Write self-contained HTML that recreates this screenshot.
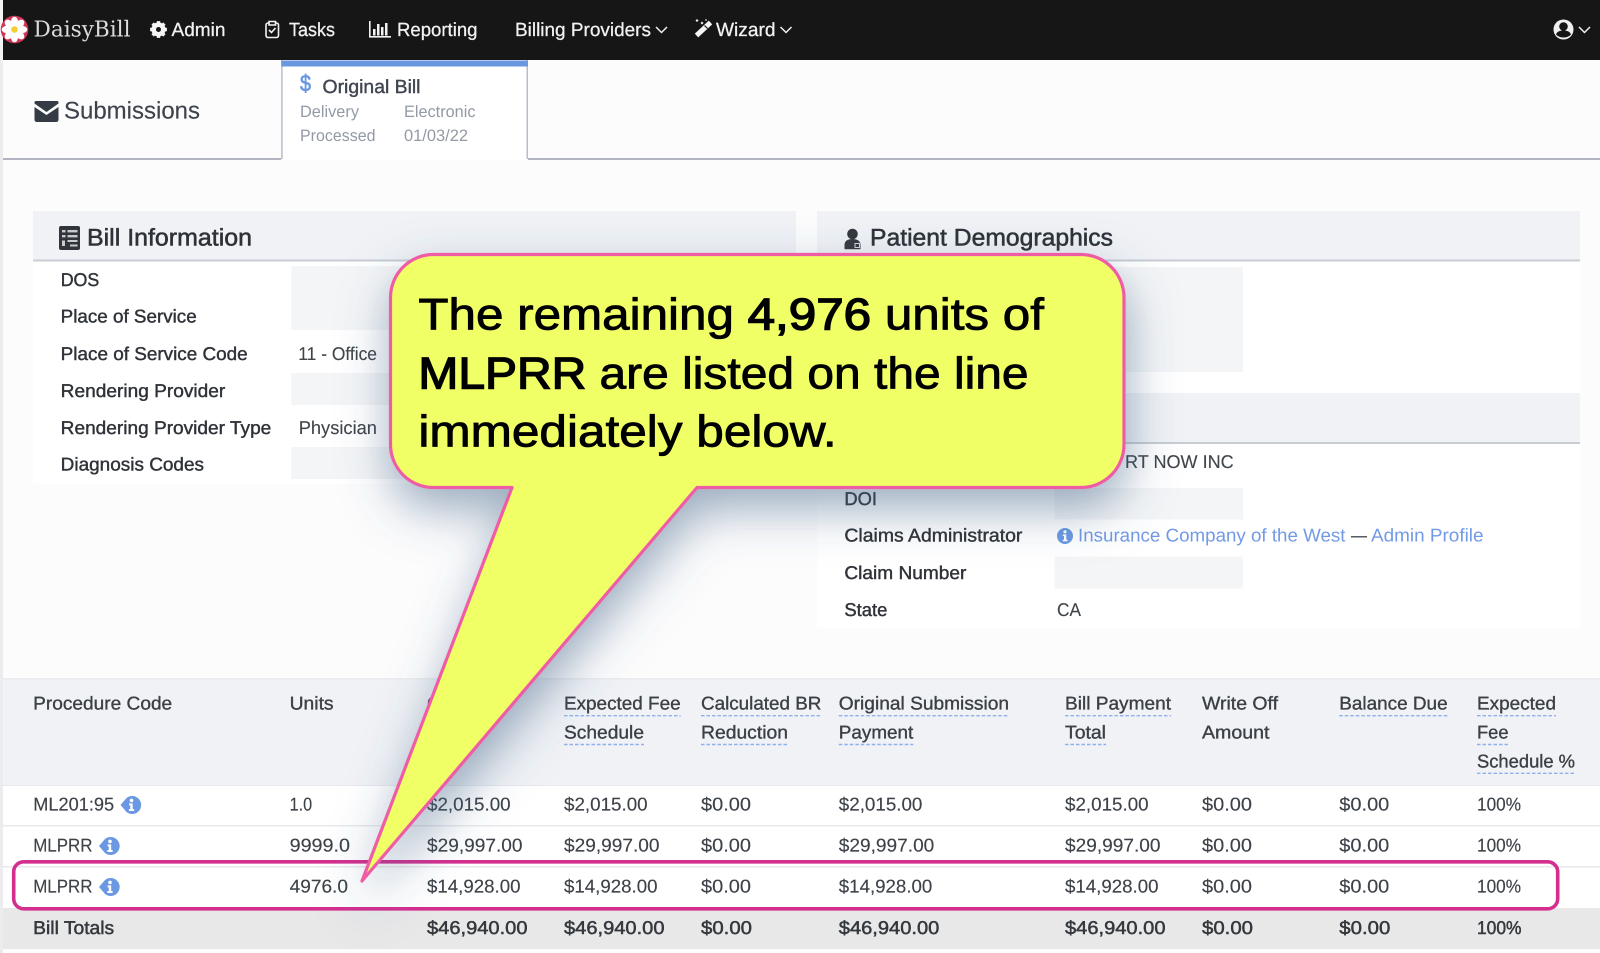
<!DOCTYPE html>
<html><head><meta charset="utf-8"><title>DaisyBill</title>
<style>
html,body{margin:0;padding:0;background:#fcfcfd;width:1600px;height:953px;overflow:hidden}
svg{display:block;position:absolute;left:0;top:0}
text{font-family:"Liberation Sans",sans-serif;text-rendering:geometricPrecision}
.n{font-size:19px;fill:#f2f2f2;stroke:#f2f2f2;stroke-width:.25}
.l{font-size:18.500px;fill:#2f3338;stroke:#2f3338;stroke-width:.42}
.v{font-size:18.500px;fill:#3f4449;stroke:#3f4449;stroke-width:.12}
.t{font-size:18.500px;fill:#3d4248;stroke:#3d4248;stroke-width:.15}
.b{font-size:18.500px;fill:#34383d;stroke:#34383d;stroke-width:.5}
.h{font-size:18.500px;fill:#3b4046;stroke:#3b4046;stroke-width:.35}
.g{font-size:16.500px;fill:#939aa5}
.a{font-size:18.500px;fill:#7199e6}
.ti{font-size:24px;fill:#2f3338;stroke:#2f3338;stroke-width:.55}
.c{font-size:44.500px;fill:#000;stroke:#000;stroke-width:.85}
.cb{stroke-width:1.400}
.d{stroke:#8fb0ee;stroke-width:1.400;stroke-dasharray:3.500 2;fill:none}
.w{fill:#fff}
.k{fill:#f4f5f7}
</style></head><body>
<svg width="1600" height="953" viewBox="0 0 1600 953" xmlns="http://www.w3.org/2000/svg">
<defs>
<filter id="sh" x="-25%" y="-25%" width="150%" height="150%"><feDropShadow dx="2" dy="20" stdDeviation="24" flood-color="#3f6285" flood-opacity=".52"/></filter>
<filter id="soft" x="0" y="0" width="100%" height="100%"><feGaussianBlur stdDeviation=".35"/></filter>
<g id="inf"><path d="M-11 0 L-5 -7 A9 9 0 1 1 -5 7Z" fill="#6a98e2"/><circle cx="0" cy="-4.600" r="1.800" fill="#fff"/><path d="M-2.400 -1.600H1.200V4H2.600V6H-2.600V4H-1.200V.4H-2.400Z" fill="#fff"/></g>
<path id="chev" d="M0 0L5.500 5.500L11 0" fill="none" stroke="#f0f0f0" stroke-width="1.500"/>
</defs>
<g filter="url(#soft)">
<rect width="1600" height="953" fill="#fcfcfd"/>
<rect x="0" y="60" width="3" height="893" fill="#ececee"/>
<!-- navbar -->
<rect x="3" y="0" width="1597" height="60" fill="#191919"/>
<rect x="0" y="0" width="3" height="60" fill="#f4f4f4"/>
<g transform="translate(14.500 29.500)">
<circle r="13.800" fill="#cf3456"/>
<g fill="#fff"><ellipse cx="0" cy="-7" rx="3.700" ry="5.800"/><ellipse cx="0" cy="-7" rx="3.700" ry="5.800" transform="rotate(45)"/><ellipse cx="0" cy="-7" rx="3.700" ry="5.800" transform="rotate(90)"/><ellipse cx="0" cy="-7" rx="3.700" ry="5.800" transform="rotate(135)"/><ellipse cx="0" cy="-7" rx="3.700" ry="5.800" transform="rotate(180)"/><ellipse cx="0" cy="-7" rx="3.700" ry="5.800" transform="rotate(225)"/><ellipse cx="0" cy="-7" rx="3.700" ry="5.800" transform="rotate(270)"/><ellipse cx="0" cy="-7" rx="3.700" ry="5.800" transform="rotate(315)"/></g>
<circle r="3.300" fill="#f3cf35"/></g>
<text x="33.500" y="36.700" style="font-family:'DejaVu Serif',serif;font-size:22px;fill:#dcdcdc" textLength="97" lengthAdjust="spacingAndGlyphs">DaisyBill</text>
<g transform="translate(158.500 29.500)"><circle r="5" fill="none" stroke="#f6f6f6" stroke-width="4.200"/><path d="M0-8.400V8.400M-8.400 0H8.400M-5.900-5.900L5.900 5.900M-5.900 5.900L5.900-5.900" stroke="#f6f6f6" stroke-width="3.400"/><circle r="2.500" fill="#191919"/></g>
<text x="171.500" y="36" class="n" textLength="54" lengthAdjust="spacingAndGlyphs">Admin</text>
<g fill="none" stroke="#f2f2f2" stroke-width="1.600"><rect x="266" y="23" width="12.500" height="14.500" rx="2"/><path d="M269 21.500h6.500V25H269z" fill="#191919"/><path d="M269 30l2.500 2.500 4-4.500"/></g>
<text x="289" y="36" class="n" textLength="46" lengthAdjust="spacingAndGlyphs">Tasks</text>
<g fill="#f2f2f2"><rect x="369" y="36" width="22" height="1.600"/><rect x="369" y="21" width="1.600" height="16"/><rect x="373" y="29" width="2.500" height="6.500"/><rect x="377" y="24" width="2.500" height="11.500"/><rect x="381" y="27" width="2.500" height="8.500"/><rect x="385" y="23" width="2.500" height="12.500"/></g>
<text x="397" y="36" class="n" textLength="80.500" lengthAdjust="spacingAndGlyphs">Reporting</text>
<text x="515" y="36" class="n" textLength="136" lengthAdjust="spacingAndGlyphs">Billing Providers</text>
<use href="#chev" x="656" y="27"/>
<path d="M696.500 35.500L710.500 22.500" stroke="#f6f6f6" stroke-width="5"/><path d="M704.500 25.500L707.500 28.500" stroke="#191919" stroke-width="1.200"/>
<path d="M697 19l1.500 1.500-1.500 1.500-1.500-1.500zM702 21.500l1.500 1.500-1.500 1.500-1.500-1.500zM706 19l1 1-1 1-1-1z" fill="#f0f0f0"/>
<text x="716" y="36" class="n" textLength="59.500" lengthAdjust="spacingAndGlyphs">Wizard</text>
<use href="#chev" x="780.500" y="27"/>
<circle cx="1563.500" cy="29.500" r="10" fill="#f0f0f0"/><circle cx="1563.500" cy="26.500" r="4.300" fill="#191919"/><path d="M1556 34.500c1-3 4-4 7.500-4s6.500 1 7.500 4c-2 2-4.500 3-7.500 3s-5.500-1-7.500-3z" fill="#191919"/>
<use href="#chev" x="1579" y="27"/>
<!-- sub-tabs -->
<rect x="3" y="158" width="1597" height="2" fill="#b2b4c2"/>
<rect x="281.200" y="60" width="246.800" height="100" fill="#fff"/>
<rect x="281.200" y="60" width="1.500" height="99" fill="#b9bccb"/><rect x="526.500" y="60" width="1.500" height="99" fill="#b9bccb"/>
<rect x="281.200" y="60.500" width="246.800" height="6" fill="#6a98e0"/>
<path d="M34.500 102.500Q34.500 101 36 101H57Q58.500 101 58.500 102.500V103.500L46.500 112L34.500 103.500ZM34.500 107L46.500 115L58.500 107V119.500Q58.500 122 56 122H37Q34.500 122 34.500 119.500Z" fill="#343a45"/>
<text x="64" y="118.500" style="font-size:24px;fill:#3c424c;stroke:#3c424c;stroke-width:.15" textLength="136" lengthAdjust="spacingAndGlyphs">Submissions</text>
<text x="300" y="91" style="font-size:23px;fill:#6a98e0;stroke:#6a98e0;stroke-width:.7" textLength="11" lengthAdjust="spacingAndGlyphs">$</text>
<text x="322.500" y="93" style="font-size:19px;fill:#3f4550;stroke:#3f4550;stroke-width:.4" textLength="98" lengthAdjust="spacingAndGlyphs">Original Bill</text>
<text x="300" y="117" class="g" textLength="59" lengthAdjust="spacingAndGlyphs">Delivery</text>
<text x="404" y="117" class="g" textLength="71.500" lengthAdjust="spacingAndGlyphs">Electronic</text>
<text x="300" y="141" class="g" textLength="75.500" lengthAdjust="spacingAndGlyphs">Processed</text>
<text x="404" y="141" class="g" textLength="64" lengthAdjust="spacingAndGlyphs">01/03/22</text>
<!-- Bill Information -->
<rect x="33" y="211" width="763" height="273" class="w"/>
<rect x="33" y="211" width="763" height="49" fill="#f0f2f6"/><rect x="33" y="259.500" width="763" height="2" fill="#c9ccd2"/>
<path d="M61 226H78Q80 226 80 228V248Q80 250 78 250H61Q59 250 59 248V228Q59 226 61 226Z" fill="#30343a"/>
<g fill="#c8cbd0"><rect x="62" y="230" width="3.500" height="2.400"/><rect x="67.500" y="230" width="10" height="2.400"/><rect x="62" y="235" width="3.500" height="2.400"/><rect x="67.500" y="235" width="10" height="2.400"/><rect x="62" y="240.500" width="3" height="5.500"/><rect x="67.500" y="240" width="10" height="2"/><rect x="70" y="244.500" width="7.500" height="2"/></g>
<text x="87" y="245.500" class="ti" textLength="165" lengthAdjust="spacingAndGlyphs">Bill Information</text>
<rect x="291.300" y="266" width="189" height="64" class="k"/><rect x="291.300" y="373" width="189" height="32" class="k"/><rect x="291.300" y="447" width="189" height="32" class="k"/>
<text x="60.700" y="286" class="l" textLength="38.600" lengthAdjust="spacingAndGlyphs">DOS</text>
<text x="60.700" y="322.700" class="l" textLength="136" lengthAdjust="spacingAndGlyphs">Place of Service</text>
<text x="60.700" y="360" class="l" textLength="187" lengthAdjust="spacingAndGlyphs">Place of Service Code</text>
<text x="60.700" y="397" class="l" textLength="164.600" lengthAdjust="spacingAndGlyphs">Rendering Provider</text>
<text x="60.700" y="434" class="l" textLength="210.600" lengthAdjust="spacingAndGlyphs">Rendering Provider Type</text>
<text x="60.700" y="470.700" class="l" textLength="143.300" lengthAdjust="spacingAndGlyphs">Diagnosis Codes</text>
<text x="298.300" y="360" class="v" textLength="78.700" lengthAdjust="spacingAndGlyphs">11 - Office</text>
<text x="298.700" y="434" class="v" textLength="78.300" lengthAdjust="spacingAndGlyphs">Physician</text>
<!-- Patient Demographics -->
<rect x="817" y="211" width="763" height="417" class="w"/>
<rect x="817" y="211" width="763" height="49" fill="#f0f2f6"/><rect x="817" y="259.500" width="763" height="2" fill="#c9ccd2"/>
<circle cx="852.500" cy="234" r="5.300" fill="#34383e"/><path d="M844.500 248.500v-3.500c0-4 3-6 8-6s8 2 8 6v3.500q0 .8-.8.800H845.300q-.8 0-.8-.8z" fill="#34383e"/><path d="M855 243.500h4.500v4h-4.500z" fill="none" stroke="#d4d6da" stroke-width="1"/>
<text x="870" y="245.500" class="ti" textLength="243" lengthAdjust="spacingAndGlyphs">Patient Demographics</text>
<rect x="1054" y="267" width="189" height="105" class="k"/>
<rect x="817" y="393" width="763" height="50" fill="#f0f2f6"/><rect x="817" y="442" width="763" height="2" fill="#c9ccd2"/>
<text x="1125" y="468" class="v" textLength="108.700" lengthAdjust="spacingAndGlyphs">RT NOW INC</text>
<rect x="1054.500" y="488" width="188.500" height="31.500" class="k"/><rect x="1054.500" y="556.500" width="188.500" height="32" class="k"/>
<text x="844.400" y="505" class="l" textLength="32.600" lengthAdjust="spacingAndGlyphs">DOI</text>
<text x="844.400" y="541.700" class="l" textLength="178" lengthAdjust="spacingAndGlyphs">Claims Administrator</text>
<text x="844.400" y="579" class="l" textLength="122" lengthAdjust="spacingAndGlyphs">Claim Number</text>
<text x="844.400" y="616" class="l" textLength="43" lengthAdjust="spacingAndGlyphs">State</text>
<circle cx="1065" cy="536" r="8" fill="#6a98e2"/><circle cx="1065" cy="531.800" r="1.600" fill="#fff"/><path d="M1062.800 534.400H1066.300V539.700H1067.500V541.200H1062.800V539.700H1064V535.900H1062.800Z" fill="#fff"/>
<text x="1078" y="541.700" class="a" textLength="267.500" lengthAdjust="spacingAndGlyphs">Insurance Company of the West</text>
<text x="1351" y="541.700" class="v" textLength="16" lengthAdjust="spacingAndGlyphs">—</text>
<text x="1371" y="541.700" class="a" textLength="112.500" lengthAdjust="spacingAndGlyphs">Admin Profile</text>
<text x="1057" y="616" class="v" textLength="24" lengthAdjust="spacingAndGlyphs">CA</text>
<!-- Table -->
<rect x="3" y="678" width="1597" height="107" fill="#f0f2f6"/>
<rect x="3" y="678" width="1597" height="1.500" fill="#ebecef"/>
<rect x="3" y="785" width="1597" height="123" class="w"/>
<rect x="3" y="785" width="1597" height="1" fill="#e8e9ec"/><rect x="3" y="825" width="1597" height="1.500" fill="#e8e9ec"/><rect x="3" y="866" width="1597" height="1.500" fill="#e8e9ec"/>
<rect x="3" y="908" width="1597" height="41" fill="#e8e8e9"/>
<text x="33.200" y="709.300" class="h" textLength="139" lengthAdjust="spacingAndGlyphs">Procedure Code</text>
<text x="289.600" y="709.300" class="h" textLength="44" lengthAdjust="spacingAndGlyphs">Units</text>
<text x="427" y="709.300" class="h">C</text>
<text x="564" y="709.300" class="h" textLength="116.600" lengthAdjust="spacingAndGlyphs">Expected Fee</text>
<text x="564" y="738.300" class="h" textLength="80" lengthAdjust="spacingAndGlyphs">Schedule</text>
<text x="701" y="709.300" class="h" textLength="120.400" lengthAdjust="spacingAndGlyphs">Calculated BR</text>
<text x="701" y="738.300" class="h" textLength="87" lengthAdjust="spacingAndGlyphs">Reduction</text>
<text x="838.800" y="709.300" class="h" textLength="170.200" lengthAdjust="spacingAndGlyphs">Original Submission</text>
<text x="838.800" y="738.300" class="h" textLength="74.500" lengthAdjust="spacingAndGlyphs">Payment</text>
<text x="1065" y="709.300" class="h" textLength="106" lengthAdjust="spacingAndGlyphs">Bill Payment</text>
<text x="1065" y="738.300" class="h" textLength="41" lengthAdjust="spacingAndGlyphs">Total</text>
<text x="1202" y="709.300" class="h" textLength="76" lengthAdjust="spacingAndGlyphs">Write Off</text>
<text x="1202" y="738.300" class="h" textLength="67.500" lengthAdjust="spacingAndGlyphs">Amount</text>
<text x="1339.300" y="709.300" class="h" textLength="108.300" lengthAdjust="spacingAndGlyphs">Balance Due</text>
<text x="1477" y="709.300" class="h" textLength="79" lengthAdjust="spacingAndGlyphs">Expected</text>
<text x="1477" y="738.300" class="h" textLength="31.500" lengthAdjust="spacingAndGlyphs">Fee</text>
<text x="1477" y="767.300" class="h" textLength="98" lengthAdjust="spacingAndGlyphs">Schedule %</text>
<path class="d" d="M564 715.700H680.600M701 715.700H821.400M838.800 715.700H1009M1065 715.700H1171M1339.300 715.700H1447.600M1477 715.700H1556M564 744.500H644M701 744.500H788M838.800 744.500H913.300M1065 744.500H1106M1477 744.500H1508.500M1477 773.300H1575"/>
<!-- row 1 -->
<text x="33.200" y="810.700" class="t" textLength="81" lengthAdjust="spacingAndGlyphs">ML201:95</text>
<use href="#inf" x="131.500" y="805"/>
<text x="289.600" y="810.700" class="t" textLength="22.500" lengthAdjust="spacingAndGlyphs">1.0</text>
<text x="427" y="810.700" class="t" textLength="83.600" lengthAdjust="spacingAndGlyphs">$2,015.00</text>
<text x="564" y="810.700" class="t" textLength="83.600" lengthAdjust="spacingAndGlyphs">$2,015.00</text>
<text x="701" y="810.700" class="t" textLength="50" lengthAdjust="spacingAndGlyphs">$0.00</text>
<text x="838.800" y="810.700" class="t" textLength="83.600" lengthAdjust="spacingAndGlyphs">$2,015.00</text>
<text x="1065" y="810.700" class="t" textLength="83.600" lengthAdjust="spacingAndGlyphs">$2,015.00</text>
<text x="1202" y="810.700" class="t" textLength="50" lengthAdjust="spacingAndGlyphs">$0.00</text>
<text x="1339.300" y="810.700" class="t" textLength="50" lengthAdjust="spacingAndGlyphs">$0.00</text>
<text x="1477" y="810.700" class="t" textLength="44" lengthAdjust="spacingAndGlyphs">100%</text>
<!-- row 2 -->
<text x="33.200" y="851.700" class="t" textLength="59.300" lengthAdjust="spacingAndGlyphs">MLPRR</text>
<use href="#inf" x="110" y="846"/>
<text x="289.600" y="851.700" class="t" textLength="60.400" lengthAdjust="spacingAndGlyphs">9999.0</text>
<text x="427" y="851.700" class="t" textLength="95.500" lengthAdjust="spacingAndGlyphs">$29,997.00</text>
<text x="564" y="851.700" class="t" textLength="95.500" lengthAdjust="spacingAndGlyphs">$29,997.00</text>
<text x="701" y="851.700" class="t" textLength="50" lengthAdjust="spacingAndGlyphs">$0.00</text>
<text x="838.800" y="851.700" class="t" textLength="95.500" lengthAdjust="spacingAndGlyphs">$29,997.00</text>
<text x="1065" y="851.700" class="t" textLength="95.500" lengthAdjust="spacingAndGlyphs">$29,997.00</text>
<text x="1202" y="851.700" class="t" textLength="50" lengthAdjust="spacingAndGlyphs">$0.00</text>
<text x="1339.300" y="851.700" class="t" textLength="50" lengthAdjust="spacingAndGlyphs">$0.00</text>
<text x="1477" y="851.700" class="t" textLength="44" lengthAdjust="spacingAndGlyphs">100%</text>
<!-- row 3 -->
<text x="33.200" y="892.700" class="t" textLength="59.300" lengthAdjust="spacingAndGlyphs">MLPRR</text>
<use href="#inf" x="110" y="887"/>
<text x="289.600" y="892.700" class="t" textLength="58.400" lengthAdjust="spacingAndGlyphs">4976.0</text>
<text x="427" y="892.700" class="t" textLength="93.500" lengthAdjust="spacingAndGlyphs">$14,928.00</text>
<text x="564" y="892.700" class="t" textLength="93.500" lengthAdjust="spacingAndGlyphs">$14,928.00</text>
<text x="701" y="892.700" class="t" textLength="50" lengthAdjust="spacingAndGlyphs">$0.00</text>
<text x="838.800" y="892.700" class="t" textLength="93.500" lengthAdjust="spacingAndGlyphs">$14,928.00</text>
<text x="1065" y="892.700" class="t" textLength="93.500" lengthAdjust="spacingAndGlyphs">$14,928.00</text>
<text x="1202" y="892.700" class="t" textLength="50" lengthAdjust="spacingAndGlyphs">$0.00</text>
<text x="1339.300" y="892.700" class="t" textLength="50" lengthAdjust="spacingAndGlyphs">$0.00</text>
<text x="1477" y="892.700" class="t" textLength="44" lengthAdjust="spacingAndGlyphs">100%</text>
<!-- totals -->
<text x="33.200" y="934" class="b" textLength="81" lengthAdjust="spacingAndGlyphs">Bill Totals</text>
<text x="427" y="934" class="b" textLength="100.500" lengthAdjust="spacingAndGlyphs">$46,940.00</text>
<text x="564" y="934" class="b" textLength="100.500" lengthAdjust="spacingAndGlyphs">$46,940.00</text>
<text x="701" y="934" class="b" textLength="51" lengthAdjust="spacingAndGlyphs">$0.00</text>
<text x="838.800" y="934" class="b" textLength="100.500" lengthAdjust="spacingAndGlyphs">$46,940.00</text>
<text x="1065" y="934" class="b" textLength="100.500" lengthAdjust="spacingAndGlyphs">$46,940.00</text>
<text x="1202" y="934" class="b" textLength="51" lengthAdjust="spacingAndGlyphs">$0.00</text>
<text x="1339.300" y="934" class="b" textLength="51" lengthAdjust="spacingAndGlyphs">$0.00</text>
<text x="1477" y="934" class="b" textLength="44.500" lengthAdjust="spacingAndGlyphs">100%</text>
</g>
<!-- highlight -->
<rect x="13.700" y="861.800" width="1544" height="47" rx="10" fill="none" stroke="#d42f8f" stroke-width="3.600"/>
<!-- callout -->
<path filter="url(#sh)" d="M434 254.500H1081A43 43 0 0 1 1124 297.500V444.500A43 43 0 0 1 1081 487.500H697L362 881L512 487.500H434A43 43 0 0 1 390.500 444.500V297.500A43 43 0 0 1 434 254.500Z" fill="#f1ff66" stroke="#ef5ba6" stroke-width="3.200" stroke-linejoin="round"/>
<text x="418.400" y="329.500" class="c" textLength="625.600" lengthAdjust="spacingAndGlyphs">The remaining <tspan class="cb">4,976</tspan> units of</text>
<text x="418.400" y="388.500" class="c" textLength="610.200" lengthAdjust="spacingAndGlyphs"><tspan class="cb">MLPRR</tspan> are listed on the line</text>
<text x="418.400" y="446.700" class="c" textLength="418.300" lengthAdjust="spacingAndGlyphs">immediately below.</text>
</svg>
</body></html>
